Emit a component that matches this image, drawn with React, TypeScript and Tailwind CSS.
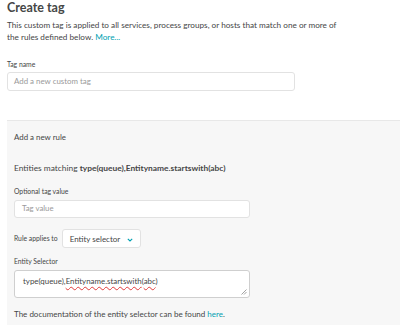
export default function App() {
    return (
        <div className="w-[400px] h-[325px] overflow-hidden bg-white font-['Lato',_sans-serif] text-[#454646]">
            {/* Header */}
            <div className="pl-[7px]">
                <h1 className="pt-[1px] text-[12.5px] leading-[13px] font-bold">Create tag</h1>
                <p className="mt-[5px] w-[335px] text-[8.2px] leading-[12px]">
                    This custom tag is applied to all services, process groups, or hosts that match one or more of the rules defined below.{' '}
                    <a className="text-[#00a1b2]">More...</a>
                </p>
                <div className="mt-[16px] text-[6.8px] leading-[11px]">Tag name</div>
                <div className="mt-[2px] w-[288px] h-[19px] flex items-center px-[6px] border border-[#e2e2e2] rounded-[3px] text-[7.9px] text-[#9a9a9a]">
                    Add a new custom tag
                </div>
            </div>

            {/* Rule panel */}
            <div className="mt-[29px] ml-[7px] h-[300px] bg-[#f7f7f7] border-t border-[#e8e8e8] pl-[7px] pt-[10px]">
                <div className="text-[7.9px] leading-[12px]">Add a new rule</div>
                <div className="mt-[19px] text-[8.4px] leading-[12px]">
                    Entities matching <span className="font-bold">type(queue),Entityname.startswith(abc)</span>
                </div>

                <div className="mt-[12px] text-[6.8px] leading-[11px]">Optional tag value</div>
                <div className="mt-[3px] w-[236px] h-[18px] flex items-center px-[7px] bg-white border border-[#e2e2e2] rounded-[3px] text-[7.8px] text-[#9a9a9a]">
                    Tag value
                </div>

                <div className="mt-[11px] flex items-center gap-[4px]">
                    <span className="text-[6.8px] leading-[11px]">Rule applies to</span>
                    <div className="w-[79px] h-[19px] flex items-center justify-between pl-[7px] pr-[7px] bg-white border border-[#e2e2e2] rounded-[3px] text-[8px]">
                        <span>Entity selector</span>
                        <svg className="mt-[2px]" width="6" height="4" viewBox="0 0 6 4" fill="none">
                            <path d="M0.8 0.8 L3 3 L5.2 0.8" stroke="#00a1b2" strokeWidth="1.1" />
                        </svg>
                    </div>
                </div>

                <div className="mt-[8px] text-[6.8px] leading-[11px]">Entity Selector</div>
                <div className="relative mt-[3px] w-[236px] h-[28px] px-[8px] pt-[5px] bg-white border border-[#cfcfcf] rounded-[3px] text-[7.9px] leading-[11px]">
                    type(queue),
                    <span className="underline decoration-wavy decoration-[#e03b3b] decoration-[0.6px] underline-offset-[2px]">Entityname.startswith</span>
                    (<span className="underline decoration-wavy decoration-[#e03b3b] decoration-[0.6px] underline-offset-[2px]">abc</span>)
                    <svg className="absolute right-[2px] bottom-[2px]" width="6" height="6" viewBox="0 0 6 6">
                        <path d="M5.5 0.5 L0.5 5.5 M5.5 3 L3 5.5" stroke="#8a8a8a" strokeWidth="0.8" />
                    </svg>
                </div>

                <div className="mt-[10px] text-[8px] leading-[12px]">
                    The documentation of the entity selector can be found <a className="text-[#00a1b2]">here</a>.
                </div>
            </div>
        </div>
    );
}
